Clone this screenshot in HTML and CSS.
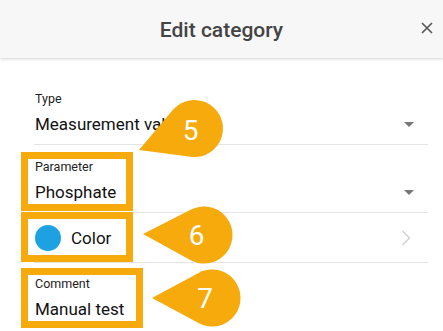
FILE: index.html
```html
<!DOCTYPE html>
<html lang="en">
<head>
    <meta charset="UTF-8">
    <meta name="viewport" content="width=device-width, initial-scale=1.0">
    <title>Edit category</title>
    <link rel="stylesheet" href="styles.css">
</head>
<body>

    <div class="topbar">
        <h1 class="title">Edit category</h1>
        <div class="close-btn">
            <svg width="12" height="12" viewBox="0 0 12 12">
                <path d="M1 1 L11 11 M11 1 L1 11" stroke="#555" stroke-width="1.6" fill="none"/>
            </svg>
        </div>
    </div>

    <div class="form">
        <div class="field">
            <div class="field-body">
                <div class="field-label">Type</div>
                <div class="field-value">Measurement value</div>
            </div>
            <div class="caret-box"><span class="caret"></span></div>
        </div>

        <div class="field">
            <div class="field-body">
                <div class="field-label">Parameter</div>
                <div class="field-value">Phosphate</div>
            </div>
            <div class="caret-box"><span class="caret"></span></div>
        </div>

        <div class="field color-row">
            <span class="swatch"></span>
            <span class="color-name">Color</span>
            <svg class="chevron" width="10" height="16" viewBox="0 0 10 16">
                <path d="M1.5 1 L8.5 8 L1.5 15" stroke="#d2d2d2" stroke-width="1.5" fill="none"/>
            </svg>
        </div>

        <div class="field last">
            <div class="field-body">
                <div class="field-label">Comment</div>
                <div class="field-value">Manual test</div>
            </div>
        </div>
    </div>

    <!-- пометки поверх формы -->
    <div class="mark mark-param"></div>
    <div class="mark mark-color"></div>
    <div class="mark mark-comment"></div>

    <svg class="callouts" width="443" height="331" viewBox="0 0 443 331">
        <path d="M139 150 L172.7 110.1 A28.5 28.5 0 1 1 190.8 156.8 Z" fill="#f6aa0c"/>
        <text x="190.5" y="140" class="callout-num">5</text>

        <path d="M143 234 L191.1 209.6 A28.5 28.5 0 1 1 190.3 260 Z" fill="#f6aa0c"/>
        <text x="196.5" y="245" class="callout-num">6</text>

        <path d="M152 298 L198.5 272.9 A28.5 28.5 0 1 1 198.5 323.1 Z" fill="#f6aa0c"/>
        <text x="205" y="308" class="callout-num">7</text>
    </svg>

</body>
</html>
```

FILE: styles.css
```css
* {
    margin: 0;
    padding: 0;
    box-sizing: border-box;
}

body {
    background: #fff;
    width: 443px;
    height: 331px;
    overflow: hidden;
    position: relative;
    font-family: Roboto, 'Liberation Sans', sans-serif;
    color: #212121;
}

.topbar {
    height: 58px;
    background: #f7f7f7;
    box-shadow: 0 1px 3px rgba(0, 0, 0, 0.18);
    display: flex;
    align-items: center;
    justify-content: center;
    position: relative;
}

.title {
    font-size: 21px;
    font-weight: 500;
    color: #444;
    margin-top: 1px;
}

.close-btn {
    position: absolute;
    right: 10px;
    top: 22px;
    width: 12px;
    height: 12px;
    display: flex;
}

.form {
    padding: 19px 15px 0 34px;
}

.field {
    display: flex;
    align-items: flex-end;
    padding: 15px 0 8px;
    border-bottom: 1px solid #e4e4e4;
}

.field.last {
    border-bottom: none;
    padding-top: 14px;
}

.field-body {
    flex: 1;
    padding-left: 1px;
}

.field-label {
    font-size: 12.5px;
    line-height: 14px;
    color: #222;
    margin-bottom: 6px;
}

.field-value {
    font-size: 17px;
    line-height: 24px;
    color: #111;
    white-space: nowrap;
}

.caret-box {
    height: 24px;
    display: flex;
    align-items: center;
    margin-right: 14px;
}

.caret {
    width: 0;
    height: 0;
    border-left: 5px solid transparent;
    border-right: 5px solid transparent;
    border-top: 5px solid #777;
}

.color-row {
    align-items: center;
    padding: 12px 0 11px;
}

.swatch {
    width: 26px;
    height: 26px;
    border-radius: 50%;
    background: #1ea1e1;
    margin-left: 1px;
}

.color-name {
    flex: 1;
    font-size: 17px;
    line-height: 24px;
    color: #111;
    margin-left: 10px;
}

.chevron {
    margin-right: 17px;
}

.mark {
    position: absolute;
    border: 7px solid #f6aa0c;
}

.mark-param {
    left: 21px;
    top: 152px;
    width: 112px;
    height: 59px;
}

.mark-color {
    left: 21px;
    top: 212px;
    width: 112px;
    height: 50px;
}

.mark-comment {
    left: 21px;
    top: 268px;
    width: 122px;
    height: 60px;
}

.callouts {
    position: absolute;
    left: 0;
    top: 0;
    pointer-events: none;
}

.callout-num {
    font-family: Roboto, 'Liberation Sans', sans-serif;
    font-size: 28px;
    fill: #fff;
    text-anchor: middle;
}
```
